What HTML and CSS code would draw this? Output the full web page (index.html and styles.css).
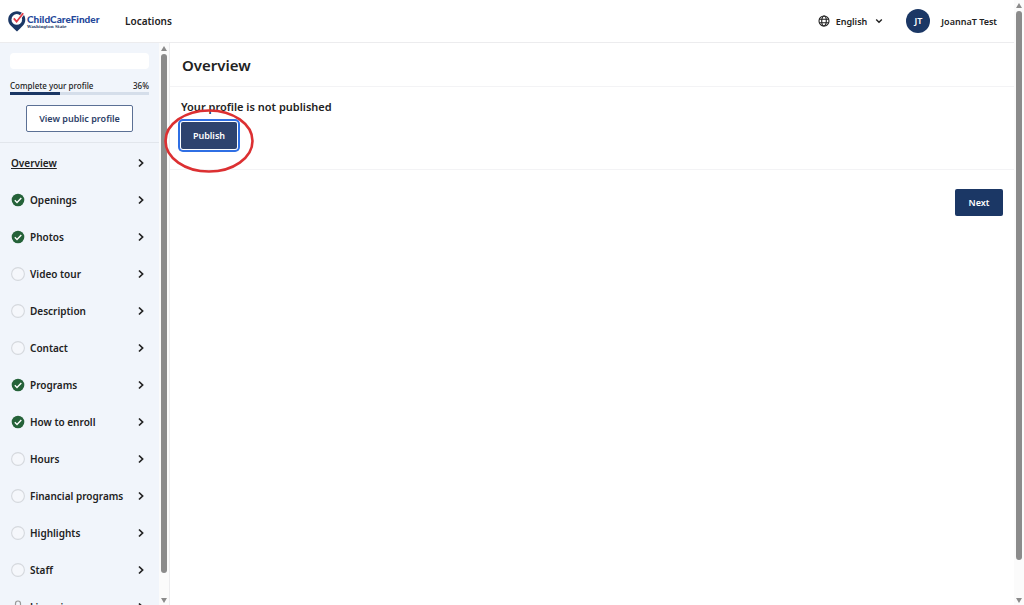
FILE: index.html
```html
<!DOCTYPE html>
<html lang="en">
  <head>
    <meta charset="UTF-8" />
    <meta name="viewport" content="width=device-width, initial-scale=1.0" />
    <title>Child Care Finder - Overview</title>
    <link rel="stylesheet" href="styles.css">
  </head>
  <body>
    <svg class="sprite" aria-hidden="true">
      <symbol id="chevron" viewBox="0 0 8 10">
        <path d="M2 1.5 L5.6 5 L2 8.5" fill="none" stroke="currentColor" stroke-width="1.7" />
      </symbol>
      <symbol id="check" viewBox="0 0 14 14">
        <circle cx="7" cy="7" r="6.3" fill="#256239" />
        <path d="M3.8 7.3 L6 9.4 L10.3 4.9" fill="none" stroke="#fff" stroke-width="1.4" />
      </symbol>
      <symbol id="empty" viewBox="0 0 14 14">
        <circle cx="7" cy="7" r="6.4" fill="#f5f7fb" stroke="#d5d8dd" stroke-width="1.1" />
      </symbol>
      <symbol id="lock" viewBox="0 0 14 14">
        <path d="M4.5 6 V3.5 a2.5 2.5 0 0 1 5 0 V6" fill="none" stroke="#999" stroke-width="1.2" />
        <rect x="3" y="6" width="8" height="7" rx="1" fill="#999" />
      </symbol>
    </svg>

    <div class="page">
      <header class="header">
        <a href="#" class="logo">
          <svg class="logo-pin" viewBox="0 0 18 21">
            <path d="M9 0.3 C4 0.3 0.2 4 0.2 8.7 C0.2 13.5 4.6 16 9 20.4 C13.4 16 17.3 13.5 17.3 8.7 C17.3 4 14 0.3 9 0.3 Z" fill="#1b3765" />
            <circle cx="8.8" cy="8.4" r="5.3" fill="#fff" />
            <path d="M5.8 7.6 L8.6 10.9 L15.4 2.3" fill="none" stroke="#fff" stroke-width="3" />
            <path d="M5.8 7.4 L8.6 10.7 L15.2 2.3" fill="none" stroke="#e03a45" stroke-width="1.8" />
          </svg>
          <span class="logo-text">
            <span class="logo-name">ChildCareFinder</span>
            <span class="logo-state">Washington State</span>
          </span>
        </a>
        <a href="#" class="header-link">Locations</a>
        <button type="button" class="language">
          <svg class="globe" viewBox="0 0 12 12" fill="none" stroke="#222" stroke-width="1.1">
            <circle cx="6" cy="6" r="5" />
            <ellipse cx="6" cy="6" rx="2.3" ry="5" />
            <path d="M1.3 4.3 H10.7 M1.3 7.7 H10.7" />
          </svg>
          English
          <svg class="caret" viewBox="0 0 8 6">
            <path d="M1.2 1.4 L4 4.2 L6.8 1.4" fill="none" stroke="#222" stroke-width="1.4" />
          </svg>
        </button>
        <button type="button" class="account">
          <span class="avatar">JT</span>
          JoannaT Test
        </button>
      </header>

      <div class="content">
        <aside class="sidebar">
          <div class="profile">
            <div class="profile-name"></div>
            <div class="progress-label">
              <label for="progress">Complete your profile</label>
              <span>36%</span>
            </div>
            <progress id="progress" class="progress" value="36" max="100"></progress>
            <button type="button" class="view-profile">View public profile</button>
          </div>
          <nav class="menu">
            <a href="#" class="active"><span>Overview</span><svg class="chevron"><use href="#chevron" /></svg></a>
            <a href="#"><svg class="status"><use href="#check" /></svg><span>Openings</span><svg class="chevron"><use href="#chevron" /></svg></a>
            <a href="#"><svg class="status"><use href="#check" /></svg><span>Photos</span><svg class="chevron"><use href="#chevron" /></svg></a>
            <a href="#"><svg class="status"><use href="#empty" /></svg><span>Video tour</span><svg class="chevron"><use href="#chevron" /></svg></a>
            <a href="#"><svg class="status"><use href="#empty" /></svg><span>Description</span><svg class="chevron"><use href="#chevron" /></svg></a>
            <a href="#"><svg class="status"><use href="#empty" /></svg><span>Contact</span><svg class="chevron"><use href="#chevron" /></svg></a>
            <a href="#"><svg class="status"><use href="#check" /></svg><span>Programs</span><svg class="chevron"><use href="#chevron" /></svg></a>
            <a href="#"><svg class="status"><use href="#check" /></svg><span>How to enroll</span><svg class="chevron"><use href="#chevron" /></svg></a>
            <a href="#"><svg class="status"><use href="#empty" /></svg><span>Hours</span><svg class="chevron"><use href="#chevron" /></svg></a>
            <a href="#"><svg class="status"><use href="#empty" /></svg><span>Financial programs</span><svg class="chevron"><use href="#chevron" /></svg></a>
            <a href="#"><svg class="status"><use href="#empty" /></svg><span>Highlights</span><svg class="chevron"><use href="#chevron" /></svg></a>
            <a href="#"><svg class="status"><use href="#empty" /></svg><span>Staff</span><svg class="chevron"><use href="#chevron" /></svg></a>
            <a href="#"><svg class="status"><use href="#lock" /></svg><span>Licensing</span><svg class="chevron"><use href="#chevron" /></svg></a>
          </nav>
        </aside>
        <div class="scrollbar sidebar-scrollbar">
          <span class="arrow up"></span>
          <span class="track"><span class="thumb"></span></span>
          <span class="arrow down"></span>
        </div>

        <main class="main">
          <h1>Overview</h1>
          <section class="publish">
            <h2>Your profile is not published</h2>
            <div class="publish-action">
              <button type="button" class="primary focused">Publish</button>
              <svg class="highlight" viewBox="0 0 90 64">
                <ellipse cx="45" cy="32" rx="43.5" ry="30.5" fill="none" stroke="#dc3032" stroke-width="2.6" />
              </svg>
            </div>
          </section>
          <div class="actions">
            <button type="button" class="primary">Next</button>
          </div>
        </main>
      </div>
    </div>
    <div class="scrollbar page-scrollbar">
      <span class="arrow up"></span>
      <span class="track"><span class="thumb"></span></span>
      <span class="arrow down"></span>
    </div>
  </body>
</html>
```

FILE: styles.css
```css
* {
  box-sizing: border-box;
}
body {
  margin: 0;
  display: flex;
  height: 100vh;
  overflow: hidden;
  font-family: 'Noto Sans', 'Open Sans', sans-serif;
  font-size: 10px;
  font-weight: 600;
  color: #222;
  background-color: #fff;
}
button {
  font: inherit;
  color: inherit;
  padding: 0;
  border: none;
  background: none;
  cursor: pointer;
}
a {
  color: inherit;
  text-decoration: none;
}
.sprite {
  position: absolute;
  width: 0;
  height: 0;
}
.page {
  flex: 1;
  min-width: 0;
  display: flex;
  flex-direction: column;
}

/* header */
.header {
  flex: none;
  height: 43px;
  display: flex;
  align-items: center;
  padding: 0 17px 0 8px;
  border-bottom: 1px solid #ececee;
  font-size: 9px;
}
.logo {
  display: flex;
  align-items: center;
  gap: 1px;
  width: 117px;
}
.logo-pin {
  width: 18px;
  height: 21px;
}
.logo-text {
  display: flex;
  flex-direction: column;
  white-space: nowrap;
}
.logo-name {
  font-family: Lato, sans-serif;
  font-size: 10px;
  font-weight: 900;
  line-height: 10px;
  color: #24479a;
}
.logo-state {
  font-family: 'DejaVu Serif', serif;
  font-size: 4px;
  font-weight: 700;
  line-height: 5px;
  color: #1b3765;
}
.header-link {
  font-size: 10px;
}
.language {
  display: flex;
  align-items: center;
  gap: 6px;
  margin-left: auto;
}
.globe {
  width: 12px;
  height: 12px;
}
.caret {
  width: 8px;
  height: 6px;
  margin-left: 2px;
}
.account {
  display: flex;
  align-items: center;
  gap: 11px;
  margin-left: 23px;
}
.avatar {
  width: 24px;
  height: 24px;
  line-height: 24px;
  border-radius: 50%;
  background-color: #1b3765;
  color: #fff;
  text-align: center;
}

/* sidebar */
.content {
  flex: 1;
  min-height: 0;
  display: flex;
}
.sidebar {
  flex: none;
  width: 159px;
  overflow: hidden;
  background-color: #f1f5fb;
}
.profile {
  display: flex;
  flex-direction: column;
  padding: 10px;
  border-bottom: 1px solid #e2e6ec;
}
.profile-name {
  height: 16px;
  border-radius: 4px;
  background-color: #fff;
}
.progress-label {
  display: flex;
  justify-content: space-between;
  margin-top: 11px;
  font-size: 8px;
  font-weight: 500;
  line-height: 12px;
}
.progress {
  appearance: none;
  width: 100%;
  height: 3px;
  border: none;
  background-color: #d5deea;
}
.progress::-webkit-progress-bar {
  background-color: #d5deea;
}
.progress::-webkit-progress-value {
  background-color: #1b3765;
}
.view-profile {
  align-self: center;
  width: 107px;
  height: 27px;
  margin-top: 10px;
  border: 1px solid #5b7095;
  border-radius: 2px;
  background-color: #fff;
  color: #2c4067;
  font-size: 9px;
}
.menu {
  padding-top: 1px;
}
.menu a {
  display: flex;
  align-items: center;
  height: 37px;
  padding: 0 14px 0 11px;
}
.menu .active span {
  text-decoration: underline;
}
.status {
  width: 14px;
  height: 14px;
  margin-right: 5px;
}
.chevron {
  width: 8px;
  height: 10px;
  margin-left: auto;
}

/* scrollbars */
.scrollbar {
  flex: none;
  display: flex;
  flex-direction: column;
  align-items: center;
  background-color: #fbfbfb;
}
.sidebar-scrollbar {
  width: 11px;
  padding: 3px 0 2px;
  border-right: 1px solid #ececee;
}
.page-scrollbar {
  width: 10px;
  padding: 3px 0 2px;
}
.track {
  flex: 1;
  width: 6px;
  margin: 3px 0;
}
.thumb {
  display: block;
  height: 96%;
  border-radius: 3px;
  background-color: #8b8b8b;
}
.page-scrollbar .thumb {
  height: 94%;
}
.arrow {
  border: 3px solid transparent;
}
.up {
  border-top: none;
  border-bottom: 5px solid #8b8b8b;
}
.down {
  border-bottom: none;
  border-top: 5px solid #8b8b8b;
}

/* main */
.main {
  flex: 1;
  min-width: 0;
}
h1 {
  margin: 0;
  padding: 1px 12px 0;
  font-size: 15px;
  font-weight: 600;
  line-height: 42px;
  border-bottom: 1px solid #f3f3f5;
}
.publish {
  padding: 12px 11px 20px;
  border-bottom: 1px solid #f3f3f5;
}
h2 {
  margin: 0;
  font-size: 11px;
  font-weight: 600;
  line-height: 16px;
}
.publish-action {
  position: relative;
  width: 56px;
  margin-top: 7px;
}
.primary {
  display: block;
  width: 48px;
  height: 27px;
  border-radius: 2px;
  background-color: #1b3765;
  color: #fff;
  font-size: 9px;
}
.focused {
  width: 56px;
  background-color: #2e436e;
  box-shadow: 0 0 0 1px #fff, 0 0 0 3px #2f6fe4;
}
.highlight {
  position: absolute;
  top: -13px;
  left: -17px;
  width: 90px;
  height: 64px;
  pointer-events: none;
}
.actions {
  display: flex;
  justify-content: flex-end;
  padding: 19px 11px;
}
```
